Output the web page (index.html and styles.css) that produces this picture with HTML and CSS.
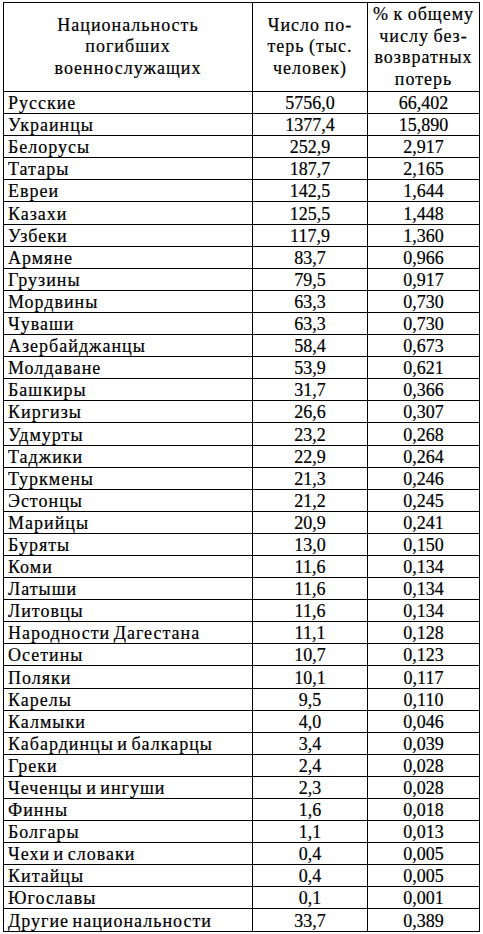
FILE: index.html
```html
<!DOCTYPE html>
<html lang="ru">
<head>
<meta charset="utf-8">
<link rel="stylesheet" href="styles.css">
</head>
<body>
<table class="losses">
  <colgroup>
    <col class="c-name">
    <col class="c-num">
    <col class="c-pct">
  </colgroup>
  <thead>
    <tr class="head">
      <th>Национальность<br>погибших<br>военнослужащих</th>
      <th>Число по-<br>терь (тыс.<br>человек)</th>
      <th>% к общему<br>числу без-<br>возвратных<br>потерь</th>
    </tr>
  </thead>
  <tbody>
    <tr><td>Русские</td><td>5756,0</td><td>66,402</td></tr>
    <tr><td>Украинцы</td><td>1377,4</td><td>15,890</td></tr>
    <tr><td>Белорусы</td><td>252,9</td><td>2,917</td></tr>
    <tr><td>Татары</td><td>187,7</td><td>2,165</td></tr>
    <tr><td>Евреи</td><td>142,5</td><td>1,644</td></tr>
    <tr><td>Казахи</td><td>125,5</td><td>1,448</td></tr>
    <tr><td>Узбеки</td><td>117,9</td><td>1,360</td></tr>
    <tr><td>Армяне</td><td>83,7</td><td>0,966</td></tr>
    <tr><td>Грузины</td><td>79,5</td><td>0,917</td></tr>
    <tr><td>Мордвины</td><td>63,3</td><td>0,730</td></tr>
    <tr><td>Чуваши</td><td>63,3</td><td>0,730</td></tr>
    <tr><td>Азербайджанцы</td><td>58,4</td><td>0,673</td></tr>
    <tr><td>Молдаване</td><td>53,9</td><td>0,621</td></tr>
    <tr><td>Башкиры</td><td>31,7</td><td>0,366</td></tr>
    <tr><td>Киргизы</td><td>26,6</td><td>0,307</td></tr>
    <tr><td>Удмурты</td><td>23,2</td><td>0,268</td></tr>
    <tr><td>Таджики</td><td>22,9</td><td>0,264</td></tr>
    <tr><td>Туркмены</td><td>21,3</td><td>0,246</td></tr>
    <tr><td>Эстонцы</td><td>21,2</td><td>0,245</td></tr>
    <tr><td>Марийцы</td><td>20,9</td><td>0,241</td></tr>
    <tr><td>Буряты</td><td>13,0</td><td>0,150</td></tr>
    <tr><td>Коми</td><td>11,6</td><td>0,134</td></tr>
    <tr><td>Латыши</td><td>11,6</td><td>0,134</td></tr>
    <tr><td>Литовцы</td><td>11,6</td><td>0,134</td></tr>
    <tr><td>Народности Дагестана</td><td>11,1</td><td>0,128</td></tr>
    <tr><td>Осетины</td><td>10,7</td><td>0,123</td></tr>
    <tr><td>Поляки</td><td>10,1</td><td>0,117</td></tr>
    <tr><td>Карелы</td><td>9,5</td><td>0,110</td></tr>
    <tr><td>Калмыки</td><td>4,0</td><td>0,046</td></tr>
    <tr><td>Кабардинцы и балкарцы</td><td>3,4</td><td>0,039</td></tr>
    <tr><td>Греки</td><td>2,4</td><td>0,028</td></tr>
    <tr><td>Чеченцы и ингуши</td><td>2,3</td><td>0,028</td></tr>
    <tr><td>Финны</td><td>1,6</td><td>0,018</td></tr>
    <tr><td>Болгары</td><td>1,1</td><td>0,013</td></tr>
    <tr><td>Чехи и словаки</td><td>0,4</td><td>0,005</td></tr>
    <tr><td>Китайцы</td><td>0,4</td><td>0,005</td></tr>
    <tr><td>Югославы</td><td>0,1</td><td>0,001</td></tr>
    <tr><td>Другие национальности</td><td>33,7</td><td>0,389</td></tr>
  </tbody>
</table>
</body>
</html>
```
FILE: styles.css
```css
html, body {
  margin: 0;
  padding: 0;
  background: #fff;
}
body {
  padding: 2px 0 0 3px;
  font-family: "Liberation Serif", "Times New Roman", serif;
  color: #000;
}
.losses {
  border-collapse: collapse;
  table-layout: fixed;
  width: 476px;
  font-size: 18px;
  -webkit-text-stroke: 0.2px #000;
}
.c-name { width: 249px; }
.c-num { width: 115px; }
.c-pct { width: 112px; }
.losses th,
.losses td {
  border: 1px solid #000;
  padding: 0;
  overflow: hidden;
  white-space: nowrap;
}
.losses th {
  font-weight: normal;
  line-height: 21.5px;
  height: 88px;
  text-align: center;
  vertical-align: middle;
  letter-spacing: 1px;
  word-spacing: -1px;
}
.losses td {
  height: 21.1px;
  line-height: 20px;
  text-align: center;
  vertical-align: bottom;
}
.losses td:first-child {
  text-align: left;
  padding-left: 4px;
  letter-spacing: 1px;
  word-spacing: -2px;
}
```
